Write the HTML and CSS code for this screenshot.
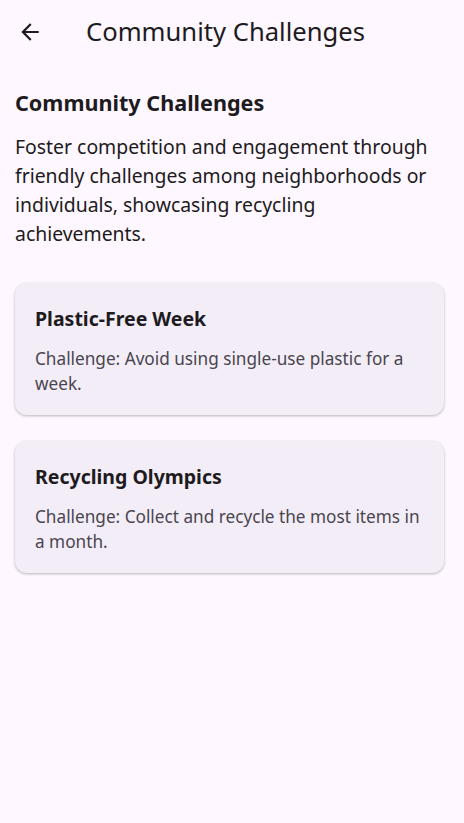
FILE: index.html
```html
<!DOCTYPE html>
<html lang="en">
<head>
<meta charset="utf-8">
<title>Community Challenges</title>
<link rel="stylesheet" href="styles.css">
</head>
<body>
<header class="appbar">
  <button class="back" aria-label="Back">
    <svg viewBox="0 0 24 24" width="26" height="26"><path d="M20 11H7.83l5.59-5.59L12 4l-8 8 8 8 1.41-1.41L7.83 13H20v-2z" fill="#1d1b20"/></svg>
  </button>
  <h1 class="appbar-title">Community Challenges</h1>
</header>
<main class="content">
  <h2 class="heading">Community Challenges</h2>
  <p class="intro">Foster competition and engagement through friendly challenges among neighborhoods or individuals, showcasing recycling achievements.</p>
  <section class="cards">
    <article class="card">
      <h3 class="card-title">Plastic-Free Week</h3>
      <p class="card-text">Challenge: Avoid using single-use plastic for a week.</p>
    </article>
    <article class="card">
      <h3 class="card-title">Recycling Olympics</h3>
      <p class="card-text">Challenge: Collect and recycle the most items in a month.</p>
    </article>
  </section>
</main>
</body>
</html>
```
FILE: styles.css
```css
* { box-sizing: border-box; }
html, body { margin: 0; padding: 0; }
body {
  background: #fef7ff;
  color: #1d1b20;
  font-family: "Noto Sans", "Open Sans", sans-serif;
  width: 464px;
  min-height: 823px;
}
.appbar {
  height: 64px;
  display: flex;
  align-items: center;
  padding-left: 17px;
}
.back {
  width: 26px;
  height: 26px;
  padding: 0;
  border: 0;
  background: none;
  display: flex;
}
.appbar-title {
  margin: 0 0 0 43px;
  font-size: 25.6px;
  font-weight: 400;
  line-height: 32px;
}
.content {
  padding: 25px 16px 16px 16px;
}
.heading {
  margin: 0 0 0 -1px;
  font-size: 21.6px;
  font-weight: 700;
  line-height: 28px;
}
.intro {
  margin: 14.5px 0 0 -1px;
  font-size: 19.4px;
  line-height: 29px;
}
.cards {
  margin: 35.5px 4px 0 -1px;
  display: flex;
  flex-direction: column;
  gap: 26px;
}
.card {
  background: #f3edf7;
  border-radius: 12px;
  padding: 22px 20px 19.5px 20px;
  box-shadow: 0 1px 3px rgba(0,0,0,0.28);
}
.card-title {
  margin: 0;
  font-size: 19.5px;
  font-weight: 700;
  line-height: 28px;
}
.card-text {
  margin: 12.5px 0 0 0;
  font-size: 17.2px;
  line-height: 25px;
  color: #49454f;
}
```
